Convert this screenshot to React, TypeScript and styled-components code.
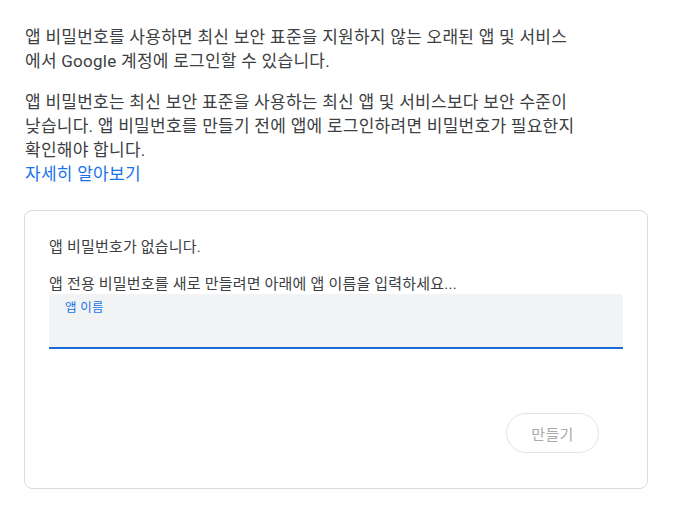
import React from "react";
import styled, { createGlobalStyle } from "styled-components";

const Global = createGlobalStyle`
  html, body { margin: 0; padding: 0; background: #fff; }
  body { font-family: Roboto, "Noto Sans CJK KR", "Noto Sans", sans-serif; color: #3c4043; }
`;

const Page = styled.div`
  padding: 25px 32px 24px 24px;
  width: 680px;
  box-sizing: border-box;
`;

const Intro = styled.div`
  max-width: 554px;
  padding-left: 1px;
`;

const Para = styled.p`
  margin: 0 0 17px;
  font-size: 17px;
  letter-spacing: 0.26px;
  line-height: 24px;
  color: #3c4043;
  &:last-child { margin-bottom: 0; }
`;

const Link = styled.a`
  display: block;
  color: #1a73e8;
  text-decoration: none;
`;

const Card = styled.section`
  margin-top: 24px;
  width: 624px;
  box-sizing: border-box;
  border: 1px solid #dadce0;
  border-radius: 8px;
  padding: 26px 24px 35px 24px;
  display: flex;
  flex-direction: column;
`;

const Note = styled.p<{ $gap?: number }>`
  margin: 0 0 ${(p) => p.$gap ?? 0}px;
  font-size: 15px;
  letter-spacing: 0.2px;
  line-height: 20px;
  color: #3c4043;
`;

const Field = styled.label`
  display: flex;
  flex-direction: column;
  height: 55px;
  box-sizing: border-box;
  background: #f1f3f4;
  border-radius: 4px 4px 0 0;
  border-bottom: 2px solid #1a6ad6;
  padding: 6px 16px 0;
`;

const FieldLabel = styled.span`
  font-size: 12.5px;
  letter-spacing: 0.3px;
  line-height: 16px;
  color: #1a73e8;
`;

const FieldInput = styled.input`
  border: none;
  outline: none;
  background: transparent;
  font: inherit;
  font-size: 16px;
  color: #202124;
  padding: 4px 0 0;
`;

const Actions = styled.div`
  display: flex;
  justify-content: flex-end;
  margin-top: 64px;
  padding-right: 24px;
`;

const Button = styled.button`
  height: 40px;
  width: 93px;
  padding: 0;
  border-radius: 20px;
  border: 1px solid #e3e3e3;
  background: #fff;
  color: #a8aaad;
  font-family: Roboto, "Noto Sans CJK KR", sans-serif;
  font-size: 15px;
  letter-spacing: 0.3px;
  cursor: default;
`;

export default function App() {
  return (
    <Page>
      <Global />
      <Intro>
        <Para>
          앱 비밀번호를 사용하면 최신 보안 표준을 지원하지 않는 오래된 앱 및 서비스에서 Google 계정에 로그인할 수 있습니다.
        </Para>
        <Para>
          앱 비밀번호는 최신 보안 표준을 사용하는 최신 앱 및 서비스보다 보안 수준이 낮습니다. 앱 비밀번호를 만들기 전에 앱에 로그인하려면 비밀번호가 필요한지 확인해야 합니다.
          <Link href="#">자세히 알아보기</Link>
        </Para>
      </Intro>
      <Card>
        <Note $gap={17}>앱 비밀번호가 없습니다.</Note>
        <Note>앱 전용 비밀번호를 새로 만들려면 아래에 앱 이름을 입력하세요...</Note>
        <Field>
          <FieldLabel>앱 이름</FieldLabel>
          <FieldInput />
        </Field>
        <Actions>
          <Button disabled>만들기</Button>
        </Actions>
      </Card>
    </Page>
  );
}
